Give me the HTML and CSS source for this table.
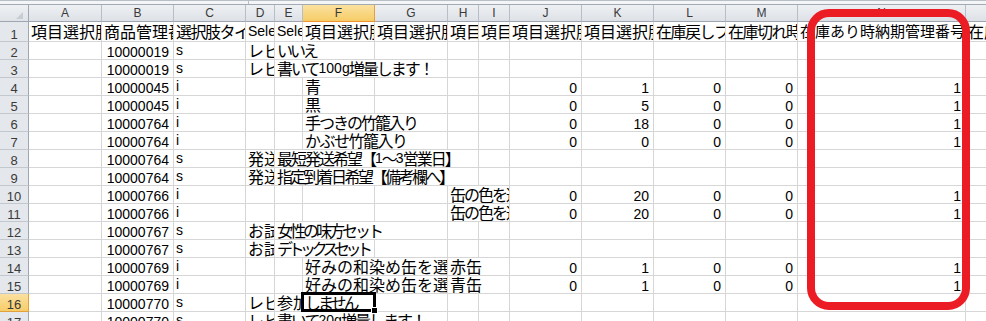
FILE: index.html
```html
<!DOCTYPE html>
<html lang="ja">
<head>
<meta charset="utf-8">
<title>Sheet</title>
<link rel="stylesheet" href="styles.css">
</head>
<body>
<div class="sheet">
  <div class="topbar"><div class="split"></div></div>

  <div class="row colhdr">
    <div class="corner"><span class="tri"></span></div>
    <div class="ch">A</div><div class="ch">B</div><div class="ch">C</div><div class="ch">D</div><div class="ch">E</div>
    <div class="ch sel">F</div><div class="ch">G</div><div class="ch">H</div><div class="ch">I</div><div class="ch">J</div>
    <div class="ch">K</div><div class="ch">L</div><div class="ch">M</div><div class="ch">N</div><div class="ch">O</div>
  </div>

  <div class="row r1">
    <div class="rh">1</div>
    <div class="c">項目選択肢名</div><div class="c">商品管理番号</div><div class="c t15">選択肢タイプ</div>
    <div class="c"><span class="lat">Select</span></div><div class="c"><span class="lat">Select</span></div>
    <div class="c">項目選択肢</div><div class="c">項目選択肢</div><div class="c">項目選択肢</div><div class="c">項目選択肢</div>
    <div class="c">項目選択肢</div><div class="c">項目選択肢</div><div class="c t15">在庫戻しフラグ</div><div class="c t15">在庫切れ時表示</div>
    <div class="c narrow">在庫あり時納期管理番号</div><div class="c">在庫数</div>
  </div>

  <div class="row rn">
    <div class="rh">2</div>
    <div class="c"></div><div class="c num">10000019</div><div class="c"><span class="lat">s</span></div><div class="c">レビュー</div>
    <div class="c s2 t3">いいえ</div>
    <div class="c"></div><div class="c"></div><div class="c"></div><div class="c"></div><div class="c"></div><div class="c"></div><div class="c"></div><div class="c"></div><div class="c"></div>
  </div>

  <div class="row rn">
    <div class="rh">3</div>
    <div class="c"></div><div class="c num">10000019</div><div class="c"><span class="lat">s</span></div><div class="c">レビュー</div>
    <div class="c s3 t2">書いて<span class="lat">100g</span>増量します！</div>
    <div class="c"></div><div class="c"></div><div class="c"></div><div class="c"></div><div class="c"></div><div class="c"></div><div class="c"></div><div class="c"></div>
  </div>

  <div class="row rn">
    <div class="rh">4</div>
    <div class="c"></div><div class="c num">10000045</div><div class="c"><span class="lat">i</span></div><div class="c"></div><div class="c"></div>
    <div class="c">青</div><div class="c"></div><div class="c"></div><div class="c"></div>
    <div class="c num">0</div><div class="c num">1</div><div class="c num">0</div><div class="c num">0</div><div class="c num">1</div><div class="c"></div>
  </div>

  <div class="row rn">
    <div class="rh">5</div>
    <div class="c"></div><div class="c num">10000045</div><div class="c"><span class="lat">i</span></div><div class="c"></div><div class="c"></div>
    <div class="c">黒</div><div class="c"></div><div class="c"></div><div class="c"></div>
    <div class="c num">0</div><div class="c num">5</div><div class="c num">0</div><div class="c num">0</div><div class="c num">1</div><div class="c"></div>
  </div>

  <div class="row rn">
    <div class="rh">6</div>
    <div class="c"></div><div class="c num">10000764</div><div class="c"><span class="lat">i</span></div><div class="c"></div><div class="c"></div>
    <div class="c s2 t2">手つきの竹籠入り</div><div class="c"></div><div class="c"></div>
    <div class="c num">0</div><div class="c num">18</div><div class="c num">0</div><div class="c num">0</div><div class="c num">1</div><div class="c"></div>
  </div>

  <div class="row rn">
    <div class="rh">7</div>
    <div class="c"></div><div class="c num">10000764</div><div class="c"><span class="lat">i</span></div><div class="c"></div><div class="c"></div>
    <div class="c s2 t15">かぶせ竹籠入り</div><div class="c"></div><div class="c"></div>
    <div class="c num">0</div><div class="c num">0</div><div class="c num">0</div><div class="c num">0</div><div class="c num">1</div><div class="c"></div>
  </div>

  <div class="row rn">
    <div class="rh">8</div>
    <div class="c"></div><div class="c num">10000764</div><div class="c"><span class="lat">s</span></div><div class="c">発送方法</div>
    <div class="c s4 t2">最短発送希望【<span class="lat">1</span>～<span class="lat">3</span>営業日】</div>
    <div class="c"></div><div class="c"></div><div class="c"></div><div class="c"></div><div class="c"></div><div class="c"></div><div class="c"></div>
  </div>

  <div class="row rn">
    <div class="rh">9</div>
    <div class="c"></div><div class="c num">10000764</div><div class="c"><span class="lat">s</span></div><div class="c">発送方法</div>
    <div class="c s4 t25">指定到着日希望【備考欄へ】</div>
    <div class="c"></div><div class="c"></div><div class="c"></div><div class="c"></div><div class="c"></div><div class="c"></div><div class="c"></div>
  </div>

  <div class="row rn">
    <div class="rh">10</div>
    <div class="c"></div><div class="c num">10000766</div><div class="c"><span class="lat">i</span></div><div class="c"></div><div class="c"></div><div class="c"></div><div class="c"></div>
    <div class="c s2 t2">缶の色を選ぶ</div>
    <div class="c num">0</div><div class="c num">20</div><div class="c num">0</div><div class="c num">0</div><div class="c num">1</div><div class="c"></div>
  </div>

  <div class="row rn">
    <div class="rh">11</div>
    <div class="c"></div><div class="c num">10000766</div><div class="c"><span class="lat">i</span></div><div class="c"></div><div class="c"></div><div class="c"></div><div class="c"></div>
    <div class="c s2 t2">缶の色を選ぶ</div>
    <div class="c num">0</div><div class="c num">20</div><div class="c num">0</div><div class="c num">0</div><div class="c num">1</div><div class="c"></div>
  </div>

  <div class="row rn">
    <div class="rh">12</div>
    <div class="c"></div><div class="c num">10000767</div><div class="c"><span class="lat">s</span></div><div class="c">お試しセット</div>
    <div class="c s3 t3">女性の味方セット</div>
    <div class="c"></div><div class="c"></div><div class="c"></div><div class="c"></div><div class="c"></div><div class="c"></div><div class="c"></div><div class="c"></div>
  </div>

  <div class="row rn">
    <div class="rh">13</div>
    <div class="c"></div><div class="c num">10000767</div><div class="c"><span class="lat">s</span></div><div class="c">お試しセット</div>
    <div class="c s2 t45">デトックスセット</div>
    <div class="c"></div><div class="c"></div><div class="c"></div><div class="c"></div><div class="c"></div><div class="c"></div><div class="c"></div><div class="c"></div><div class="c"></div>
  </div>

  <div class="row rn">
    <div class="rh">14</div>
    <div class="c"></div><div class="c num">10000769</div><div class="c"><span class="lat">i</span></div><div class="c"></div><div class="c"></div>
    <div class="c s2">好みの和染め缶を選ぶ</div><div class="c s2">赤缶</div>
    <div class="c num">0</div><div class="c num">1</div><div class="c num">0</div><div class="c num">0</div><div class="c num">1</div><div class="c"></div>
  </div>

  <div class="row rn">
    <div class="rh">15</div>
    <div class="c"></div><div class="c num">10000769</div><div class="c"><span class="lat">i</span></div><div class="c"></div><div class="c"></div>
    <div class="c s2">好みの和染め缶を選ぶ</div><div class="c s2">青缶</div>
    <div class="c num">0</div><div class="c num">1</div><div class="c num">0</div><div class="c num">0</div><div class="c num">1</div><div class="c"></div>
  </div>

  <div class="row rn">
    <div class="rh on">16</div>
    <div class="c"></div><div class="c num">10000770</div><div class="c"><span class="lat">s</span></div><div class="c">レビュー</div>
    <div class="c">参加する</div><div class="c t3">しません</div>
    <div class="c"></div><div class="c"></div><div class="c"></div><div class="c"></div><div class="c"></div><div class="c"></div><div class="c"></div><div class="c"></div><div class="c"></div>
  </div>

  <div class="row rn">
    <div class="rh">17</div>
    <div class="c"></div><div class="c num">10000770</div><div class="c"><span class="lat">s</span></div><div class="c">レビュー</div>
    <div class="c s3 t2">書いて<span class="lat">20g</span>増量します！</div>
    <div class="c"></div><div class="c"></div><div class="c"></div><div class="c"></div><div class="c"></div><div class="c"></div><div class="c"></div><div class="c"></div>
  </div>

  <div class="selbox"></div>
  <div class="fillhandle"></div>
  <div class="callout"></div>
</div>
</body>
</html>
```

FILE: styles.css
```css
html, body {
  margin: 0;
  padding: 0;
  background: #ffffff;
}
body {
  width: 986px;
  height: 321px;
  overflow: hidden;
  font-family: "Liberation Sans", "Noto Sans CJK JP", sans-serif;
}
.sheet {
  position: relative;
  width: 986px;
  height: 321px;
  overflow: hidden;
}
.topbar {
  height: 3px;
  border-top: 1px solid #b9bfc7;
  border-bottom: 1px solid #a2aab4;
  background: #f4f5f7;
  display: flex;
}
.topbar .split {
  width: 248px;
  border-right: 1px solid #b9bfc7;
}
.row {
  display: grid;
  grid-template-columns: 29px 73px 72px 72px 29px 28px 72px 73px 31px 31px 72px 72px 72px 72px 168px 100px;
  width: 1066px;
}
.colhdr { height: 17px; }
.r1 { height: 20px; }
.rn { height: 18px; }

.corner {
  box-sizing: border-box;
  background: linear-gradient(#eef0f3, #dfe3e8);
  border-right: 1px solid #9da6b1;
  border-bottom: 1px solid #9da6b1;
  display: flex;
  justify-content: flex-end;
  align-items: flex-end;
  padding: 0 5px 2px 0;
}
.tri {
  width: 0;
  height: 0;
  border-left: 7px solid transparent;
  border-bottom: 7px solid #c8cdd4;
}
.ch {
  box-sizing: border-box;
  background: linear-gradient(#eef0f3, #dde1e6);
  border-right: 1px solid #b8bec7;
  border-bottom: 1px solid #9da6b1;
  font-family: "Liberation Sans", sans-serif;
  font-size: 12px;
  line-height: 16px;
  color: #3a3a3a;
  text-align: center;
}
.ch.sel {
  background: linear-gradient(#fbe2a0, #f6cc66);
  border-right: 1px solid #e2a13c;
  border-bottom: 1px solid #f0942f;
}
.rh {
  box-sizing: border-box;
  background: #e4e7eb;
  border-right: 1px solid #9da6b1;
  border-bottom: 1px solid #c3c8cf;
  font-family: "Liberation Sans", sans-serif;
  font-size: 13px;
  line-height: 12px;
  color: #3a3a3a;
  display: flex;
  justify-content: center;
  align-items: flex-end;
}
.rh.on {
  background: linear-gradient(#fbe0a0, #f6cd68);
  border-right: 1px solid #e2a13c;
  border-bottom: 1px solid #e2a13c;
}
.c {
  box-sizing: border-box;
  border-right: 1px solid #d6d6d6;
  border-bottom: 1px solid #d6d6d6;
  overflow: hidden;
  white-space: nowrap;
  padding: 0 2px 2px 2px;
  font-family: "Noto Sans CJK JP", "Liberation Sans", sans-serif;
  font-size: 16px;
  line-height: 14px;
  color: #000000;
  display: flex;
  align-items: flex-end;
}
.r1 .c { padding-bottom: 3px; }
.c.narrow { font-size: 15px; }
.t15 { letter-spacing: -1.5px; }
.t2 { letter-spacing: -2px; }
.t25 { letter-spacing: -2.5px; }
.t3 { letter-spacing: -3px; }
.t45 { letter-spacing: -4.5px; }
.num {
  justify-content: flex-end;
  padding: 0 4px 0 2px;
  font-family: "Liberation Sans", sans-serif;
  font-size: 14px;
}
.lat {
  font-family: "Liberation Sans", sans-serif;
  font-size: 14px;
  letter-spacing: 0;
  margin-right: -1px;
}
.s2 { grid-column: span 2; }
.s3 { grid-column: span 3; }
.s4 { grid-column: span 4; }

.selbox {
  position: absolute;
  left: 301px;
  top: 292px;
  width: 75px;
  height: 20px;
  box-sizing: border-box;
  border: 3px solid #000000;
}
.fillhandle {
  position: absolute;
  left: 371px;
  top: 307px;
  width: 5px;
  height: 5px;
  background: #000000;
  border: 1px solid #ffffff;
}
.callout {
  position: absolute;
  left: 807px;
  top: 9px;
  width: 163px;
  height: 301px;
  box-sizing: border-box;
  border: 8px solid #ec1c24;
  border-radius: 22px;
}
```
